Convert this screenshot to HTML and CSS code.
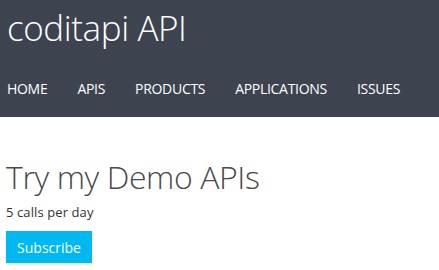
FILE: index.html
```html
<!DOCTYPE html>
<html lang="en">
<head>
  <meta charset="UTF-8">
  <title>coditapi API</title>
  <link rel="stylesheet" href="styles.css">
</head>
<body>
  <header class="header">
    <div class="brand">coditapi API</div>
    <nav class="nav">
      <a href="#">HOME</a>
      <a href="#">APIS</a>
      <a href="#">PRODUCTS</a>
      <a href="#">APPLICATIONS</a>
      <a href="#">ISSUES</a>
    </nav>
  </header>
  <main class="content">
    <h1>Try my Demo APIs</h1>
    <div class="limit">5 calls per day</div>
    <button class="button">Subscribe</button>
  </main>
</body>
</html>
```
FILE: styles.css
```css
body { margin:0; padding:0; font-family:"Open Sans", "Noto Sans", sans-serif; background:#fff; }
.header { background:#3d4450; height:117px; padding:0 7px; box-sizing:border-box; }
.brand { color:#fff; font-size:35px; font-weight:300; line-height:44px; padding-top:6px; letter-spacing:-0.4px; }
.nav { display:flex; gap:30px; margin-top:29px; }
.nav a { color:#fff; text-decoration:none; font-size:14px; line-height:20px; letter-spacing:-0.3px; }
.content { padding:0 6px; }
h1 { font-size:32px; font-weight:300; color:#4a4a4a; margin:40px 0 0; line-height:40px; letter-spacing:-0.4px; }
.limit { font-size:13px; color:#333; margin-top:6px; line-height:18px; letter-spacing:0.1px; }
.button { margin-top:10px; background:#00b9f2; color:#fff; border:none; font-family:inherit; font-size:14px; width:86px; height:32px; padding:0; cursor:pointer; }
```
